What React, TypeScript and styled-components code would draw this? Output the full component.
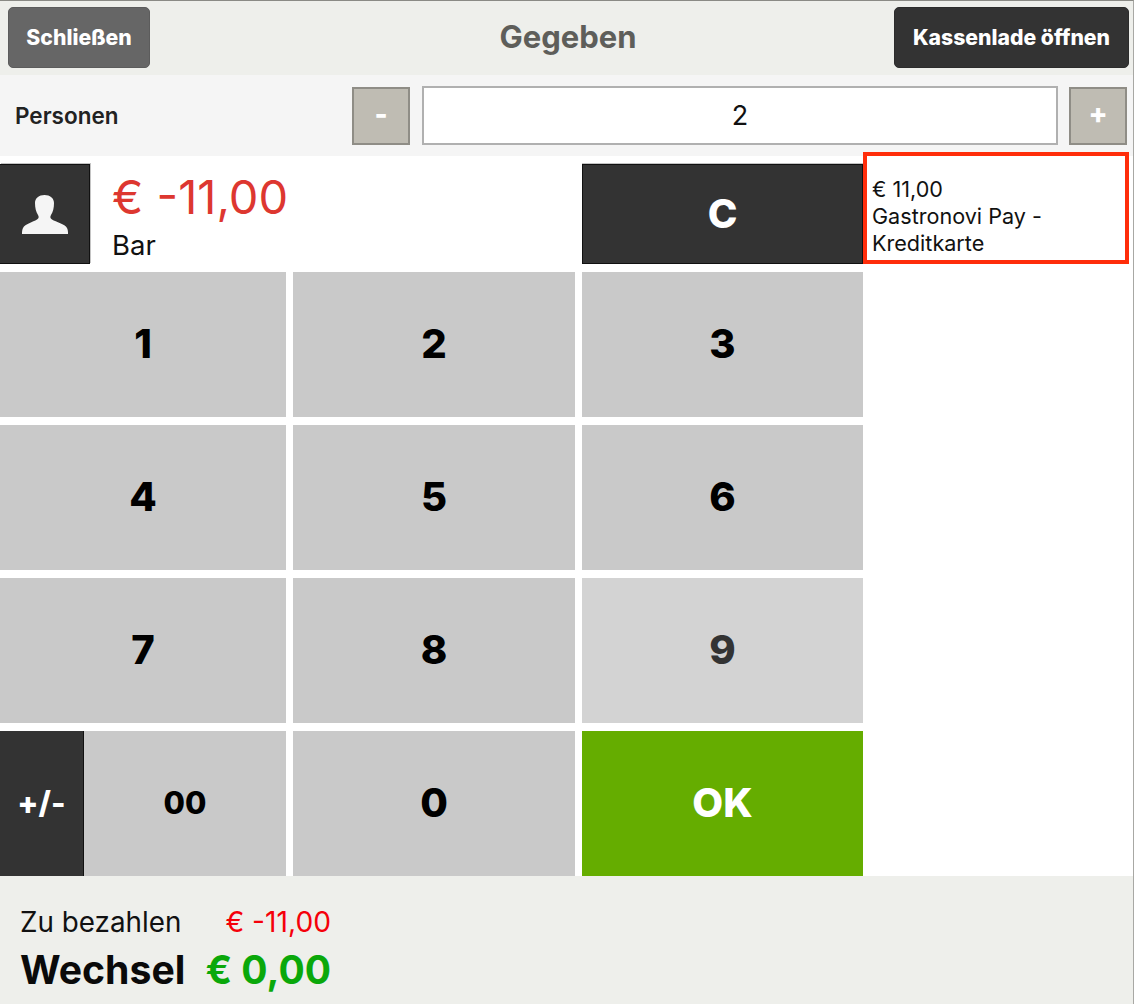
import * as React from 'react';
import styled, { createGlobalStyle } from 'styled-components';

const GlobalStyle = createGlobalStyle`
  html, body {
    margin: 0;
    padding: 0;
    background: #fff;
    font-family: Inter, "Liberation Sans", sans-serif;
  }
  * { box-sizing: border-box; }
`;

const Page = styled.div`
  width: 1134px;
  height: 1004px;
  display: flex;
  flex-direction: column;
  border-top: 1px solid #8a8a85;
  border-right: 1px solid #a8a8a4;
  overflow: hidden;
`;

const Header = styled.header`
  height: 74px;
  flex: none;
  display: flex;
  align-items: flex-start;
  justify-content: space-between;
  padding: 6px 4px 0 8px;
  background: #eeefeb;
  position: relative;
`;

const HeaderButton = styled.button<{ $dark?: boolean }>`
  height: 61px;
  width: ${(p) => (p.$dark ? '235px' : '142px')};
  border: 1px solid ${(p) => (p.$dark ? '#2c2c2c' : '#5c5c5c')};
  border-radius: 5px;
  background: ${(p) => (p.$dark ? '#333' : '#666')};
  color: #fff;
  font: 800 21.2px Inter, sans-serif;
  padding: 0 0 1px;
`;

const Title = styled.h1`
  margin: 0;
  font-size: 31px;
  font-weight: 700;
  color: #5e5e5a;
  position: absolute;
  left: 3px;
  right: 0;
  top: 17px;
  text-align: center;
`;

const PersonRow = styled.div`
  height: 81px;
  flex: none;
  display: flex;
  align-items: center;
  gap: 11px;
  padding: 0 6px 0 15px;
  background: #f5f5f5;
`;

const PersonLabel = styled.span`
  flex: 1;
  font-size: 22.5px;
  font-weight: 600;
  color: #222;
`;

const StepButton = styled.button`
  width: 58px;
  height: 58px;
  border: 2px solid #8f8d86;
  background: #bfbcb3;
  color: #fff;
  font: 800 28px Inter, sans-serif;
  padding: 0 0 3px;
`;

const PersonValue = styled.div`
  width: 636px;
  height: 59px;
  margin-left: 1px;
  border: 2px solid #b0b0b0;
  background: #fff;
  display: flex;
  align-items: center;
  justify-content: center;
  font-size: 27px;
  color: #111;
`;

const Main = styled.main`
  flex: 1;
  display: grid;
  grid-template-columns: 286px 282px 281px 1fr;
  grid-template-rows: 100.33px repeat(4, 145.33px);
  column-gap: 7px;
  row-gap: 7.67px;
  padding-top: 8px;
  background: #fff;
`;

const Payee = styled.div`
  grid-column: 1 / 3;
  display: flex;
  gap: 22px;
`;

const PayeeIcon = styled.div`
  width: 90px;
  height: 100px;
  background: #333;
  border: 1px solid #111;
  border-left: none;
  box-shadow: 1px -1px 0 #c4c4c4;
  display: flex;
  align-items: center;
  justify-content: center;
`;

const PayeeText = styled.div`
  display: flex;
  flex-direction: column;
`;

const PayeeAmount = styled.span`
  font-size: 47px;
  line-height: 58px;
  margin-top: 4px;
  color: #dd3730;
`;

const PayeeName = styled.span`
  font-size: 27.5px;
  line-height: 38px;
  color: #111;
`;

const Key = styled.button<{ $variant?: 'dark' | 'green' | 'light' }>`
  border: none;
  padding: 0 0 2px;
  width: 100%;
  height: 100%;
  font: 800 40px Inter, sans-serif;
  background: ${(p) =>
    p.$variant === 'dark'
      ? '#333'
      : p.$variant === 'green'
        ? '#65ad00'
        : p.$variant === 'light'
          ? '#d3d3d3'
          : '#c9c9c9'};
  color: ${(p) =>
    p.$variant === 'dark' || p.$variant === 'green'
      ? '#fff'
      : p.$variant === 'light'
        ? '#333'
        : '#000'};
`;

const ClearKey = styled(Key)`
  border: 1px solid #111;
  box-shadow: 0 -1px 0 #c4c4c4;
`;

const SplitKey = styled.div`
  display: flex;
`;

const SignKey = styled(Key)`
  width: 84px;
  flex: none;
  font-size: 31px;
  border-right: 1px solid #111;
`;

const DoubleZeroKey = styled(Key)`
  font-size: 31px;
`;

const SidePanel = styled.div`
  margin-left: -7px;
  margin-top: -12px;
  margin-right: 4px;
  height: 112px;
  border: 4px solid #ff2d0a;
  background: #fff;
  padding: 20px 0 0 5px;
  font-size: 21.6px;
  line-height: 27px;
  color: #111;
`;

const Footer = styled.footer`
  height: 128px;
  flex: none;
  background: #eeefeb;
  display: grid;
  grid-template-columns: auto auto;
  justify-content: start;
  align-content: start;
  padding: 28px 0 0 20px;
`;

const DueLabel = styled.span`
  font-size: 27.8px;
  line-height: 36px;
  color: #111;
`;

const DueValue = styled.span`
  font-size: 28.2px;
  line-height: 36px;
  color: #f5000a;
  text-align: right;
`;

const ChangeLabel = styled.span`
  font-size: 39.2px;
  line-height: 60px;
  font-weight: 700;
  color: #0a0a0a;
  margin-right: 20px;
`;

const ChangeValue = styled.span`
  font-size: 39px;
  line-height: 60px;
  font-weight: 700;
  color: #0aa80a;
  text-align: right;
`;

const PersonGlyph = () => (
  <svg width="46" height="39" viewBox="0 0 46 39" aria-hidden="true">
    <path
      fill="#f5f5f5"
      d="M22.500 0C17 0 13 3 13 8c0 5 1 9 3 12 1 2 1 3-1 4.500C11 27 3 29 1 33c-1 2-1 4-1 6h46c0-2 0-4-1-6-2-4-11-6-15-8.500-2-1.500-2-2.500-1-4.500 2-3 3-7 3-12 0-5-4-8-9.500-8z"
    />
  </svg>
);

const rows = [
  ['1', '2', '3'],
  ['4', '5', '6'],
  ['7', '8', '9'],
];

const App = () => (
  <>
    <GlobalStyle />
    <Page>
      <Header>
        <HeaderButton>Schließen</HeaderButton>
        <Title>Gegeben</Title>
        <HeaderButton $dark>Kassenlade öffnen</HeaderButton>
      </Header>
      <PersonRow>
        <PersonLabel>Personen</PersonLabel>
        <StepButton>-</StepButton>
        <PersonValue>2</PersonValue>
        <StepButton>+</StepButton>
      </PersonRow>
      <Main>
        <Payee>
          <PayeeIcon>
            <PersonGlyph />
          </PayeeIcon>
          <PayeeText>
            <PayeeAmount>€ -11,00</PayeeAmount>
            <PayeeName>Bar</PayeeName>
          </PayeeText>
        </Payee>
        <ClearKey $variant="dark">C</ClearKey>
        <SidePanel>
          € 11,00
          <br />
          Gastronovi Pay -
          <br />
          Kreditkarte
        </SidePanel>
        {rows.map((row) => (
          <React.Fragment key={row[0]}>
            {row.map((n) => (
              <Key key={n} $variant={n === '9' ? 'light' : undefined}>
                {n}
              </Key>
            ))}
            <div />
          </React.Fragment>
        ))}
        <SplitKey>
          <SignKey $variant="dark">+/-</SignKey>
          <DoubleZeroKey>00</DoubleZeroKey>
        </SplitKey>
        <Key>0</Key>
        <Key $variant="green">OK</Key>
      </Main>
      <Footer>
        <DueLabel>Zu bezahlen</DueLabel>
        <DueValue>€ -11,00</DueValue>
        <ChangeLabel>Wechsel</ChangeLabel>
        <ChangeValue>€ 0,00</ChangeValue>
      </Footer>
    </Page>
  </>
);

export default App;
